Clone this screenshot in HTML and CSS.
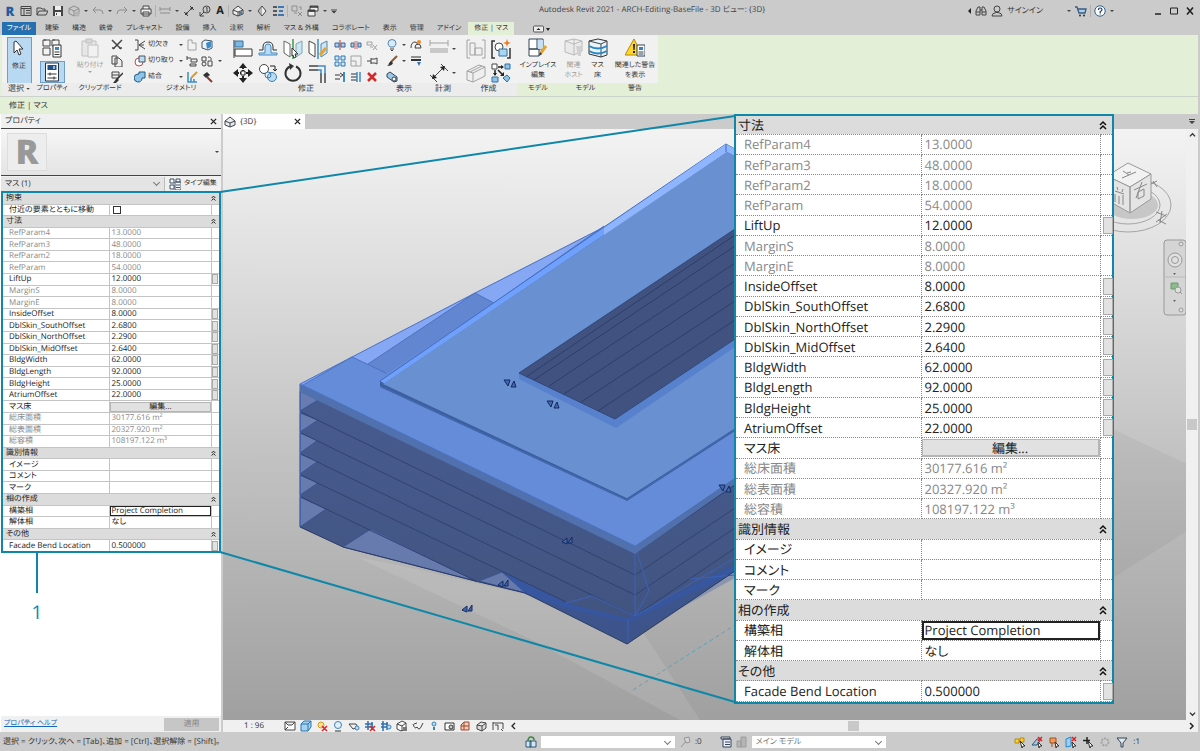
FILE: index.html
```html
<!DOCTYPE html>
<html lang="ja">
<head>
<meta charset="utf-8">
<meta name="viewport" content="width=device-width, initial-scale=1">
<title>Autodesk Revit 2021 - ARCH-Editing-BaseFile - 3D ビュー: {3D}</title>
<link rel="stylesheet" href="styles.css">
</head>
<body>
<header class="titlebar">
  <div class="quick">
    <b class="logo">R</b>
    <svg class="ic" viewBox="0 0 12 12"><path class="k" d="M1 1.500h10v9H1zM1 3.500h10M4 3.500v7M6 5.500h4M6 8h4"/></svg>
    <svg class="ic" viewBox="0 0 12 12"><path class="k" d="M1 10V3h4l1 1h3v2M1 10l2-4h9l-2 4z"/></svg>
    <svg class="ic" viewBox="0 0 12 12"><path fill="#444" d="M1 1h10v10H1z"/><path fill="#eee" d="M3 1h6v4H3zM3 7h6v4H3z"/><path fill="#444" d="M4 8h1v2H4z"/></svg>
    <svg class="ic dim" viewBox="0 0 12 12"><path class="k" d="M6 1l5 2.500v5L6 11 1 8.500v-5zM1 3.500L6 6l5-2.500M6 6v5"/><circle cx="9" cy="9" r="2.500" fill="#999"/></svg>
    <i class="caret"></i>
    <svg class="ic dim" viewBox="0 0 12 12"><path class="k" d="M4 2L1 5l3 3M1 5h7q3 0 3 4"/></svg>
    <i class="caret"></i>
    <svg class="ic dim" viewBox="0 0 12 12"><path class="k" d="M8 2l3 3-3 3M11 5H4Q1 5 1 9"/></svg>
    <i class="caret"></i>
    <svg class="ic" viewBox="0 0 12 12"><path class="k" d="M3 4V1h6v3M1 4h10v5H1zM3 7h6v4H3z" fill="#eee"/></svg>
    <i class="sep"></i>
    <svg class="ic dim" viewBox="0 0 12 12"><path class="k" d="M1 2v4M11 2v4M1 4h10"/><path fill="#888" d="M1 7h10v2H1z"/></svg>
    <i class="caret"></i>
    <svg class="ic" viewBox="0 0 12 12"><path class="k" d="M2 10l8-8M1 7l4 4M7 1l4 4"/><path fill="#333" d="M2 10l1-3 2 2zM10 2L9 5 7 3z"/></svg>
    <svg class="ic" viewBox="0 0 12 12"><circle class="k" cx="7.500" cy="4.500" r="3.500"/><path class="k" d="M7 3l1-.5V7M5 7l-4 4M1 7v4h4"/></svg>
    <b class="glyph-a">A</b>
    <i class="sep"></i>
    <svg class="ic" viewBox="0 0 12 12"><path d="M1 5l5-4 5 4v4l-5 2-5-2z" fill="#eee" class="k"/><path class="k" d="M1 5l5 2 5-2M6 7v4"/><path fill="#467aa8" d="M7 7l3-1v3l-3 1z"/></svg>
    <i class="caret"></i>
    <svg class="ic" viewBox="0 0 12 12"><path class="k" d="M6 1l4 5-4 5-4-5z" fill="#e8e8e8"/><path fill="#777" d="M6 1v10L2 6z" opacity=".5"/></svg>
    <svg class="ic" viewBox="0 0 12 12"><path stroke="#333" stroke-width="1.500" d="M1 2h4M1 6h4M1 10h4"/><path stroke="#3b78b5" stroke-width="2" d="M6 2h6M7 6h4M6 10h6"/></svg>
    <i class="sep"></i>
    <svg class="ic dim" viewBox="0 0 12 12"><path class="k" d="M1 1h5v5H1zM3 8h3M7 7l4 4M11 7l-4 4M8 2h2v3"/></svg>
    <svg class="ic" viewBox="0 0 12 12"><path class="k" d="M3 1h8v5H3zM1 5h7v6H1z" fill="#eee"/><path stroke="#333" stroke-width="1.500" d="M3 2h8M1 6h7"/></svg>
    <i class="caret"></i>
    <i class="caret big"></i>
  </div>
  <h1>Autodesk Revit 2021 - ARCH-Editing-BaseFile - 3D ビュー: {3D}</h1>
  <div class="account">
    <svg class="ic nar" viewBox="0 0 4 12"><path fill="#222" d="M4 3v6L1 6z"/></svg>
    <svg class="ic" viewBox="0 0 12 12"><path class="k" d="M1 10V6l2-4h2v8zM11 10V6L9 2H7v8zM5 5h2M1 7h4M7 7h4"/></svg>
    <svg class="ic" viewBox="0 0 12 12"><circle class="k" cx="6" cy="4" r="3"/><path class="k" d="M1 11q0-3 4-3.500h2q4 .5 4 3.500z"/></svg>
    <a href="#">サインイン</a>
    <i class="caret push"></i>
    <svg class="ic" viewBox="0 0 12 12"><path d="M0 2h2l2 6h6l1-4H3" stroke="#345d86" stroke-width="1.300" fill="#b8cce0"/><circle cx="5" cy="10.500" r="1" fill="#234"/><circle cx="9" cy="10.500" r="1" fill="#234"/></svg>
    <i class="sep"></i>
    <svg class="ic" viewBox="0 0 12 12"><circle cx="6" cy="6" r="5.200" fill="#fff" stroke="#35608c"/><path d="M4.500 5q0-2 1.700-2T8 4.600Q8 6 6.200 6.500V8M6.200 8.500v1" fill="none" stroke="#223f70" stroke-width="1.200"/></svg>
    <i class="caret"></i>
  </div>
  <div class="winbtns">
    <button aria-label="最小化"><svg class="ic" viewBox="0 0 12 12"><path stroke="#222" stroke-width="1.500" d="M3 9h6"/></svg></button>
    <button aria-label="最大化"><svg class="ic" viewBox="0 0 12 12"><path fill="none" stroke="#222" d="M2.500 3h7v6h-7z"/></svg></button>
    <button aria-label="閉じる"><svg class="ic" viewBox="0 0 12 12"><path stroke="#222" stroke-width="1.600" d="M3 2.500l6 7M9 2.500l-6 7"/></svg></button>
  </div>
</header>

<nav class="tabs">
  <a class="file" href="#">ファイル</a><a href="#">建築</a><a href="#">構造</a><a href="#">鉄骨</a><a href="#">プレキャスト</a><a href="#">設備</a><a href="#">挿入</a><a href="#">注釈</a><a href="#">解析</a><a href="#">マス &amp; 外構</a><a href="#">コラボレート</a><a href="#">表示</a><a href="#">管理</a><a href="#">アドイン</a><a class="active" href="#">修正 | マス</a>
  <button class="mini" aria-label="リボン表示"><svg viewBox="0 0 18 8"><rect x=".5" y="1" width="10" height="6" rx="1" fill="#eee" stroke="#555"/><path fill="#222" d="M3.500 5l2-2 2 2zM13 3h4l-2 3z"/></svg></button>
</nav>

<section class="ribbon">
  <div class="panel p-select">
    <div class="body"><button class="big on"><svg class="i20" viewBox="0 0 20 20"><path d="M7 3l7 8h-4l2 5-2 1-2-5-3 3V4z" fill="#fff" stroke="#333"/></svg><span>修正</span></button></div>
    <h2>選択 <i class="caret"></i></h2>
  </div>
  <div class="panel p-prop">
    <div class="body stack">
      <button aria-label="タイプ プロパティ"><svg class="i20" viewBox="0 0 20 20"><path d="M1 2h7v6H1zM10 2h7v6h-7zM1 10h7v7H1zM3 1v2M12 1v2" fill="#f4f4f4" stroke="#444"/><path d="M11 7h8v12h-8z" fill="#fff" stroke="#333"/><path d="M13 9h4v3h-4z" fill="#3c84c4"/><path d="M12.500 14h5M12.500 16.500h5" stroke="#333"/></svg></button>
      <button class="on" aria-label="プロパティ"><svg class="i20" viewBox="0 0 20 20"><path d="M3.500 1h13v18h-13z" fill="#fff" stroke="#234"/><path d="M5.500 3h9v5h-9z" fill="#244f86"/><path d="M11 4h2v3h-2z" fill="#8ec1ea"/><path d="M5.500 12h9M5.500 16h9M8 10.500v3M12 14.500v3" stroke="#333"/></svg></button>
    </div>
    <h2>プロパティ</h2>
  </div>
  <div class="panel p-clip">
    <div class="body clip">
      <button class="big dim"><svg class="i20" viewBox="0 0 20 20"><path d="M2 3h14v15H2z" fill="#ddd" stroke="#888"/><path d="M6 1h6v4H6z" fill="#bbb" stroke="#888"/><path d="M8 7h10v12H8z" fill="#f2f2f2" stroke="#888"/></svg><span>貼り付け</span><i class="caret"></i></button>
      <div class="col">
        <svg class="ic" viewBox="0 0 12 12"><path class="k w" d="M1 1l9 9M11 1L2 10M1 9h3M8 9h3"/></svg>
        <svg class="ic" viewBox="0 0 12 12"><path class="k" d="M1 1h5v8H1zM4 3h4l3 3v6H4z" fill="#fff"/></svg>
        <svg class="ic" viewBox="0 0 12 12"><path class="k" d="M1 1h7v6H1zM1 4h7" fill="#fff"/><path d="M12 2L5 9" stroke="#333" stroke-width="1.500"/><path fill="#333" d="M6 7l2 2-3 3H2z"/></svg>
      </div>
    </div>
    <h2>クリップボード</h2>
  </div>
  <div class="panel p-geo">
    <div class="body geo">
      <svg class="ic" viewBox="0 0 12 12"><path class="k" d="M1 1h3v10H1M11 2L5 6l6 4M5 6h5"/></svg><span>切欠き</span><i class="caret"></i>
      <svg class="ic dim" viewBox="0 0 12 12"><path class="k" d="M2 1h4v3h4v7H2z"/></svg><svg class="ic" viewBox="0 0 12 12"><path d="M1 3l3-2 7 1v7l-4 2-6-2z" fill="#e8f2fa" stroke="#456"/><path fill="#3f8bc4" d="M5 4l5-2v6L6 10z"/></svg><i></i>
      <svg class="ic" viewBox="0 0 12 12"><circle cx="5" cy="7" r="4" fill="#fff" stroke="#c44"/><path d="M5 1h6v6H5z" fill="#bcdcf2" stroke="#456"/></svg><span>切り取り</span><i class="caret"></i>
      <svg class="ic" viewBox="0 0 12 12"><path class="k" d="M1 1v4M1 3h4M5 4h6v3H5zM4 9h6v2H4z" fill="#ccc"/></svg><svg class="ic" viewBox="0 0 12 12"><path class="k" d="M1 2h4v4H1zM7 6h4v5H7zM7 2q4 0 3 3"/><circle cx="3" cy="9" r="2" class="k"/></svg><i class="caret"></i>
      <svg class="ic" viewBox="0 0 12 12"><path d="M5 1h6v6H8v1a4 4 0 1 1-4-5h1z" fill="#8cc4ea" stroke="#25577d"/></svg><span>結合</span><i class="caret"></i>
      <svg class="ic" viewBox="0 0 12 12"><path stroke="#3f8bc4" stroke-width="1.500" fill="none" d="M2 1v10h9M5 11V7M8 11V8"/><path d="M11 1L5 7" stroke="#d79b2c" stroke-width="2"/></svg><svg class="ic" viewBox="0 0 12 12"><path d="M2 4l4-3 3 3-4 3z" fill="#333"/><path d="M6 6l5 5" stroke="#8a3a2a" stroke-width="2"/></svg><i></i>
    </div>
    <h2>ジオメトリ</h2>
  </div>
  <div class="panel p-mod">
    <div class="body modify">
      <div class="bigs">
        <svg class="i20" viewBox="0 0 20 20"><path d="M1 1v18" stroke="#333"/><path d="M2 2h8v6H2z" fill="#7db8e4" stroke="#35729f"/><path d="M2 10h17v7H2z" fill="#fff" stroke="#333"/></svg>
        <svg class="i20" viewBox="0 0 20 20"><path d="M1 11h4V8q0-5 5-5t5 5v3h4" fill="none" stroke="#333"/><path d="M1 16h18v-2h-6V8q0-3-3-3T7 8v6H1z" fill="#b9dcf3" stroke="#3f8bc4"/></svg>
        <svg class="i20" viewBox="0 0 20 20"><path d="M1 2l6 3v13l-6-4z" fill="#fff" stroke="#666"/><path d="M19 2l-6 3v13l6-4z" fill="#cfe4f4" stroke="#7aa"/><path d="M10 0v20" stroke="#3a9a4a" stroke-width="1.500"/><path d="M9 9l6 6h-3l1 3-2 1-1-3-1 1z" fill="#fff" stroke="#333"/></svg>
        <svg class="i20" viewBox="0 0 20 20"><path d="M1 2l6 3v13l-6-4z" fill="#fff" stroke="#444"/><path d="M19 2l-6 3v13l6-4z" fill="#cfe4f4" stroke="#58a"/><path d="M10 0v20" stroke="#3f8bc4" stroke-width="1.500"/><path d="M18 9l-6 7" stroke="#e0a534" stroke-width="3"/></svg>
        <svg class="i20" viewBox="0 0 20 20"><path d="M10 0l4 5H6zM10 20l4-5H6zM0 10l5-4v8zM20 10l-5-4v8z" fill="#222"/><path d="M10 4v12M4 10h12" stroke="#222" stroke-width="2" stroke-dasharray="2 1"/><path d="M8 8h4v4H8z" fill="#fff" stroke="#222"/></svg>
        <svg class="i20" viewBox="0 0 20 20"><circle cx="6" cy="6" r="4.500" fill="#fff" stroke="#444"/><circle cx="14" cy="14" r="4.500" fill="#b9dcf3" stroke="#3f7fae"/><circle cx="10" cy="12" r="3" fill="none" stroke="#3f7fae"/><path d="M12 3h5v4M15 6l2 2 2-2" fill="none" stroke="#222"/></svg>
        <svg class="i20" viewBox="0 0 20 20"><path d="M13 3.500a7.500 7.500 0 1 1-6 0" fill="none" stroke="#333" stroke-width="2"/><path d="M6 0l5 3-4 4z" fill="#333"/></svg>
        <svg class="i20" viewBox="0 0 20 20"><path d="M1 3h9M1 7h9M17 10v10M13 10v10" stroke="#444" stroke-width="1.500"/><path d="M10 3h7v8M10 7h3v4" fill="none" stroke="#3f8bc4" stroke-width="1.500"/></svg>
      </div>
      <div class="smalls">
        <svg class="ic" viewBox="0 0 12 12"><path d="M1 4h4v4H1zM7 4h4v4H7z" fill="#a9d0ee" stroke="#37699a"/><path d="M6 1v10" stroke="#c33"/></svg>
        <svg class="ic" viewBox="0 0 12 12"><path d="M1 4h3v4H1zM8 4h3v4H8z" fill="#a9d0ee" stroke="#37699a"/><path d="M5 2v8M7 2v8" stroke="#c66"/></svg>
        <svg class="ic dim" viewBox="0 0 12 12"><path class="k" d="M1 3h5v3H1zM4 8h3M7 6l4 5M11 6l-4 5"/></svg>
        <svg class="ic" viewBox="0 0 12 12"><path d="M1 1h4v4H1zM7 1h4v4H7zM1 7h4v4H1zM7 7h4v4H7z" fill="#cfe6f6" stroke="#2f77b1"/></svg>
        <svg class="ic dim" viewBox="0 0 12 12"><path class="k" d="M1 1h10v10H1zM1 6h5v5"/></svg>
        <svg class="ic" viewBox="0 0 12 12"><path class="k" d="M1 6h4M5 3v6M5 4h4l2-1v6L9 8H5"/></svg>
        <svg class="ic" viewBox="0 0 12 12"><path d="M1 4h5M1 8h5M6 2l3 2-3 2" stroke="#333" fill="none"/><path d="M10 1v10" stroke="#3f8bc4" stroke-width="2"/></svg>
        <svg class="ic" viewBox="0 0 12 12"><path d="M1 3h6M1 6h6M1 9h6" stroke="#333"/><path d="M7 1v10M10 1v10" stroke="#3f8bc4" stroke-width="1.500"/></svg>
        <svg class="ic" viewBox="0 0 12 12"><path d="M2 2l8 8M10 2l-8 8" stroke="#d02a2a" stroke-width="2.500"/></svg>
      </div>
    </div>
    <h2>修正</h2>
  </div>
  <div class="panel p-view">
    <div class="body view">
      <svg class="ic" viewBox="0 0 12 12"><path d="M4 8Q2 6 2 4.500a4 4 0 0 1 8 0Q10 6 8 8z" fill="#d9ebfa" stroke="#4a86bb"/><path d="M4 10h4M5 11.500h2" stroke="#444"/></svg><i class="caret"></i><svg class="ic" viewBox="0 0 12 12"><path class="k" d="M1 9q0-6 4-6 2 0 3 3M5 9q0-4 3-4t3 4z"/><circle cx="9" cy="3" r="2" fill="#f08a24"/></svg>
      <svg class="ic" viewBox="0 0 12 12"><path d="M11 1L5 7" stroke="#8b5a2b" stroke-width="2"/><path d="M5 6l2 2q-1 3-6 3 2-1 2-3z" fill="#333"/></svg><i class="caret"></i><svg class="ic" viewBox="0 0 12 12"><path d="M1 2h10" stroke="#333"/><path d="M1 5h10" stroke="#333" stroke-width="2"/><path d="M7 7h4l-2 4z" fill="#3276b5"/></svg>
      <svg class="ic" viewBox="0 0 12 12"><path d="M1 3l3-2 7 5v4l-3 1-7-5z" fill="#9ec8e6" stroke="#345"/><circle cx="8" cy="8" r="2" fill="#fff" stroke="#345"/></svg>
    </div>
    <h2>表示</h2>
  </div>
  <div class="panel p-meas">
    <div class="body meas">
      <svg class="i20 dim" viewBox="0 0 20 20"><path class="k" d="M1 4h18M1 1v6M19 1v6"/><path fill="#999" d="M1 9h18v5H1z"/></svg><i class="caret"></i>
      <svg class="i20" viewBox="0 0 20 20"><path class="k" d="M4 15L15 4M1 12l7 7M12 1l7 7"/><path fill="#222" d="M3 16l1-5 4 4zM16 3l-1 5-4-4z"/></svg><i class="caret"></i>
    </div>
    <h2>計測</h2>
  </div>
  <div class="panel p-make">
    <div class="body make">
      <svg class="i20 dim" viewBox="0 0 20 20"><path class="k" d="M4 1H1v18h3M16 1h3v18h-3M4 4h5v12H4zM9 9h7v7H9z"/></svg>
      <svg class="i20" viewBox="0 0 20 20"><path d="M4 2H1v17h3M16 19h3V9" fill="none" stroke="#333" stroke-width="1.500"/><circle cx="8" cy="8" r="4" fill="#fff" stroke="#444"/><path d="M8 10h8v7H8z" fill="#a9d5f2" stroke="#34709d"/><path d="M16 0l1 3 3 1-3 1-1 3-1-3-3-1 3-1z" fill="#f07a1e"/></svg>
      <svg class="i20 dim" viewBox="0 0 20 20"><path class="k" d="M1 8l12-6 6 2v9L7 19l-6-2zM1 8l6 2 12-6M7 10v9M4 9l12-6" fill="#ddd"/></svg>
      <svg class="i20" viewBox="0 0 20 20"><path d="M1 1h5v5H1z" fill="#fff" stroke="#444"/><path d="M14 1h5v5h-5zM1 14h6v5H1z" fill="#8cc4ea" stroke="#34709d"/><path d="M16 12l3 3-3 4-4-4z" fill="#8cc4ea" stroke="#34709d"/><path d="M7 4h5M4 7v5M7 7l5 5" stroke="#222" stroke-width="1.500"/><path d="M13 4l-3-2v4zM4 13l-2-3h4zM13 13V9l-4 4z" fill="#222"/></svg>
    </div>
    <h2>作成</h2>
  </div>
  <div class="panel ctx p-inpl">
    <div class="body"><button class="big"><svg class="i20" viewBox="0 0 20 20"><path d="M1 1h14v10H1zM1 11h10v7H1zM9 1v10" fill="#fff" stroke="#345"/><path d="M10 2h5v9h-5z" fill="#c7dff2"/><path d="M18 8l-6 8" stroke="#e0a534" stroke-width="3"/><path d="M12 14l-1 4 3-2z" fill="#333"/></svg><span>インプレイス<br>編集</span></button></div>
    <h2>モデル</h2>
  </div>
  <div class="panel ctx p-host">
    <div class="body two"><button class="big dim"><svg class="i20" viewBox="0 0 20 20"><path d="M1 3l9-2 8 2v10l-8 4-9-3zM10 1v16M1 3l9 3 8-3" fill="#e2e2e2" stroke="#777"/><path d="M12 8h5v10h-3z" fill="#aaa"/></svg><span>関連<br>ホスト</span></button><button class="big"><svg class="i20" viewBox="0 0 20 20"><path d="M1 3l9-2 9 2v14l-6 2-12-3z" fill="#e9f4fb" stroke="#333"/><path d="M1 3l12 3 6-3M13 6v13" fill="none" stroke="#444"/><path d="M1 8q9 5 18 0M1 13q9 5 18 0" fill="none" stroke="#2b86c4" stroke-width="2"/></svg><span>マス<br>床</span></button></div>
    <h2>モデル</h2>
  </div>
  <div class="panel ctx p-warn">
    <div class="body"><button class="big"><svg class="i20" viewBox="0 0 20 20"><path d="M9 1l8 16H0z" fill="#ffd52e" stroke="#b48a00"/><path d="M8 6h2l-.4 6H8.400zM8 13h2v2H8z" fill="#222"/><path d="M12 7h8v11h-8z" fill="#fff" stroke="#345"/><path d="M14 9h4v3h-4z" fill="#3c7fc0"/><path d="M13.500 14h5M13.500 16h5" stroke="#345"/></svg><span>関連した警告<br>を表示</span></button></div>
    <h2>警告</h2>
  </div>
</section>
<div class="options">修正 | マス</div>

<main>
  <aside class="props">
    <div class="props-head"><span>プロパティ</span><button aria-label="閉じる"><svg class="x" viewBox="0 0 8 8"><path d="M1 1l6 6M7 1L1 7"/></svg></button></div>
    <div class="preview"><b>R</b><i class="caret"></i></div>
    <div class="typebar"><label class="combo"><select aria-label="要素フィルタ"><option>マス (1)</option></select></label>
      <button><svg class="ic" viewBox="0 0 12 12"><path d="M1 1h4v4H1zM1 7h4v4H1zM7 1h4v3H7zM6 4h6v8H6zM7 7h4M7 9.500h4" fill="#f4f8fc" stroke="#456"/></svg>タイプ編集</button></div>
    <table class="grid small">
      <colgroup><col class="c1"><col><col class="c3"></colgroup>
      <tbody>
      <tr class="sec"><th colspan="3">拘束<button aria-label="折りたたむ"><svg viewBox="0 0 8 10"><path d="M1 5l3-3 3 3M1 9l3-3 3 3"/></svg></button></th></tr>
      <tr><th><label for="mv">付近の要素とともに移動</label></th><td><input type="checkbox" id="mv"></td><td></td></tr>
      <tr class="sec"><th colspan="3">寸法<button aria-label="折りたたむ"><svg viewBox="0 0 8 10"><path d="M1 5l3-3 3 3M1 9l3-3 3 3"/></svg></button></th></tr>
      <tr class="ro"><th>RefParam4</th><td>13.0000</td><td></td></tr>
      <tr class="ro"><th>RefParam3</th><td>48.0000</td><td></td></tr>
      <tr class="ro"><th>RefParam2</th><td>18.0000</td><td></td></tr>
      <tr class="ro"><th>RefParam</th><td>54.0000</td><td></td></tr>
      <tr><th>LiftUp</th><td>12.0000</td><td><button class="more" aria-label="LiftUp の関連付け"></button></td></tr>
      <tr class="ro"><th>MarginS</th><td>8.0000</td><td></td></tr>
      <tr class="ro"><th>MarginE</th><td>8.0000</td><td></td></tr>
      <tr><th>InsideOffset</th><td>8.0000</td><td><button class="more" aria-label="InsideOffset の関連付け"></button></td></tr>
      <tr><th>DblSkin_SouthOffset</th><td>2.6800</td><td><button class="more" aria-label="SouthOffset の関連付け"></button></td></tr>
      <tr><th>DblSkin_NorthOffset</th><td>2.2900</td><td><button class="more" aria-label="NorthOffset の関連付け"></button></td></tr>
      <tr><th>DblSkin_MidOffset</th><td>2.6400</td><td><button class="more" aria-label="MidOffset の関連付け"></button></td></tr>
      <tr><th>BldgWidth</th><td>62.0000</td><td><button class="more" aria-label="BldgWidth の関連付け"></button></td></tr>
      <tr><th>BldgLength</th><td>92.0000</td><td><button class="more" aria-label="BldgLength の関連付け"></button></td></tr>
      <tr><th>BldgHeight</th><td>25.0000</td><td><button class="more" aria-label="BldgHeight の関連付け"></button></td></tr>
      <tr><th>AtriumOffset</th><td>22.0000</td><td><button class="more" aria-label="AtriumOffset の関連付け"></button></td></tr>
      <tr><th>マス床</th><td class="cell-btn"><button class="edit">編集...</button></td><td></td></tr>
      <tr class="ro"><th>総床面積</th><td>30177.616 m²</td><td></td></tr>
      <tr class="ro"><th>総表面積</th><td>20327.920 m²</td><td></td></tr>
      <tr class="ro"><th>総容積</th><td>108197.122 m³</td><td></td></tr>
      <tr class="sec"><th colspan="3">識別情報<button aria-label="折りたたむ"><svg viewBox="0 0 8 10"><path d="M1 5l3-3 3 3M1 9l3-3 3 3"/></svg></button></th></tr>
      <tr><th>イメージ</th><td></td><td></td></tr>
      <tr><th>コメント</th><td></td><td></td></tr>
      <tr><th>マーク</th><td></td><td></td></tr>
      <tr class="sec"><th colspan="3">相の作成<button aria-label="折りたたむ"><svg viewBox="0 0 8 10"><path d="M1 5l3-3 3 3M1 9l3-3 3 3"/></svg></button></th></tr>
      <tr><th><label for="ph1">構築相</label></th><td class="cell-in"><input type="text" id="ph1" value="Project Completion"></td><td></td></tr>
      <tr><th>解体相</th><td>なし</td><td></td></tr>
      <tr class="sec"><th colspan="3">その他<button aria-label="折りたたむ"><svg viewBox="0 0 8 10"><path d="M1 5l3-3 3 3M1 9l3-3 3 3"/></svg></button></th></tr>
      <tr><th>Facade Bend Location</th><td>0.500000</td><td><button class="more" aria-label="Facade Bend Location の関連付け"></button></td></tr>
      </tbody>
    </table>
    <div class="callmark"><i></i><span>1</span></div>
    <div class="props-foot"><a href="#">プロパティ ヘルプ</a><button disabled>適用</button></div>
  </aside>

  <section class="work">
    <div class="doctabs">
      <div class="doctab"><svg class="ic" viewBox="0 0 12 12"><path d="M1 5l5-4 5 4v4l-5 2-5-2z" fill="#e8eef4" stroke="#444"/><path d="M1 5l5 2 5-2M6 7v4" fill="none" stroke="#444"/></svg><span>{3D}</span><button aria-label="閉じる"><svg class="x" viewBox="0 0 8 8"><path d="M1 1l6 6M7 1L1 7"/></svg></button></div>
      <i class="caret big"></i>
    </div>
    <div class="canvas-row">
      <svg class="scene" viewBox="223 129 964 591" preserveAspectRatio="xMinYMin slice" role="img" aria-label="3D マス モデル">
        <defs>
          <linearGradient id="sky" x1="0" y1="0" x2="0" y2="1"><stop offset="0" stop-color="#f3f3f3"/><stop offset=".55" stop-color="#c2c2c2"/><stop offset="1" stop-color="#a0a0a0"/></linearGradient>
          <linearGradient id="wall" x1="0" y1="0" x2="0" y2="1"><stop offset="0" stop-color="#475b90"/><stop offset="1" stop-color="#41547f"/></linearGradient>
          <g id="grip" fill="#4169b4" stroke="#16295e"><path d="M-6-4h6l-2 6zM1 3l3-6 2 6z"/></g>
          <g id="grip2" fill="#4169b4" stroke="#16295e"><path d="M-5 1l5-4v6zM1 2l4-6v6z"/></g>
        </defs>
        <path fill="url(#sky)" d="M223 129h964v591H223z"/>
        <path fill="#fff" opacity=".1" d="M357 557l45 9 233 54 65 100-20 0-150-81z"/>
        <path fill="#000" opacity=".04" d="M1113 429l74 35v67l-74 47z"/>
        <path fill="url(#wall)" d="M300 384v143l43 20 132 34 50 12 102 51 108-73V470z"/>
        <g fill="#7f93c8" opacity=".6" stroke="#36559c">
          <path d="M300 391v20l18-11zM300 413v19l18-12zM300 433v20l18-13zM300 454v20l18-13zM300 475v20l18-12zM300 497v30l26-18z"/>
          <path d="M343 547l28-18 105 52z"/><path d="M479 581l23-9 24 21z"/>
        </g>
        <path d="M502 571l64 32 62 17 107-56v14l-90 50-18 16-102-51z" fill="#3357a4" opacity=".3"/>
        <path d="M502 571l64 32 62 15 107-54v8l-107 50-62-14-41-14z" fill="#3158b4" opacity=".5"/>
        <path fill="none" stroke="#31426f" d="M301 391l334 162 100-68M301 412l334 163 100-67M301 433l334 162 100-67M301 454l334 162 100-68M301 475l265 127M301 497l175 84"/>
        <path fill="none" stroke="#3d62b8" d="M300 384v143M635 546v70l14-25-14-45M635 616l100-58M628 620v24M566 603l26-7 43 20M690 579l45-4"/>
        <path fill="none" stroke="#2a3a63" d="M300 527l43 20 132 34 50 12 102 51 108-73"/>
        <path fill="#5070ae" d="M300 384l335 162 100-68v6l-100 70-335-162z"/>
        <path fill="#658cd8" d="M300 384l52-27 123-64 129-66 131-79v330l-100 68z"/>
        <path fill="#86a7f4" d="M300 384l52-27-49 28zM352 357l123-64-107 71zM475 293l129-66-110 76z"/>
        <path fill="#6286cf" d="M475 293l19 10-108 71-18-10z"/>
        <path fill="none" stroke="#4d74c4" d="M300 384l52-27 123-64 129-66M352 357l34 16M475 293l19 10M303 385l49-28M368 364l107-71M494 303l110-77M300 384l335 162"/>
        <path fill="#6fa0fb" stroke="#426dc0" d="M380 381l224-154 122-83 9 5v7l-8-4-344 233z"/>
        <path fill="#90b5ff" d="M604 228l122-84 9 5v7l-8-4-123 84z"/>
        <path fill="#3d5f9f" d="M380 381v6l247 114v-3l-240-113zM627 498l108-70v3l-108 70z"/>
        <path fill="#6990d0" d="M383 384l344-232 8 4v272l-108 70z"/>
        <path fill="none" stroke="#426cb6" d="M726 144v8M380 386l247 114 108-71"/>
        <path fill="#5781cd" d="M519 373v6l97 49 119-81v-10l-120 81z"/>
        <path fill="#415280" stroke="#2f4778" d="M519 373l216-144v110l-120 80z"/>
        <path fill="none" stroke="#2d3e69" d="M534 380l201-134M549 386l186-123M564 394l171-113M581 402l154-101M598 411l137-91M526 377l209-142"/>
        <path fill="none" stroke="#5aa3b8" stroke-dasharray="4 3" d="M633 690l102-65"/>
        <use href="#grip" x="510" y="384"/><use href="#grip" x="553" y="405"/><use href="#grip" x="725" y="489"/>
        <use href="#grip2" x="567" y="541"/><use href="#grip2" x="503" y="584"/><use href="#grip2" x="467" y="609"/>
        <g fill="none" stroke="#a5a5a5">
          <ellipse cx="1128" cy="205" rx="43" ry="27"/><ellipse cx="1128" cy="205" rx="32" ry="19"/>
          <ellipse cx="1132" cy="205" rx="26" ry="14" fill="#999" stroke="none" opacity=".4"/>
          <path fill="#f2f2f2" stroke="#999" d="M1128 163l23 11-21 13-23-11z"/>
          <path fill="#e4e4e4" stroke="#999" d="M1107 176l23 11v26l-23-13zM1130 187l21-13v25l-21 14z"/>
          <path stroke="#888" d="M1122 178l14-6M1129 175l-6-4M1127 173l4-1M1115 191l9 3M1117 187l1 3M1123 189l-1 3M1115 194v8M1119 196v8M1123 195v10M1134 190l13-6M1142 182l-6 16M1138 192l6-3v7l-6 3z"/>
          <path stroke="#888" d="M1156 212l10 4M1156 222l11-8M1158 220l8 4M1162 211l-2 12M1151 184l6-3M1153 181l4 6"/>
        </g>
        <g fill="#e0e0e0" stroke="#999"><rect x="1164" y="240" width="22" height="75" rx="3" fill="#d5d5d5"/>
          <circle cx="1175" cy="260" r="7"/><circle cx="1175" cy="260" r="3.500"/><path d="M1164 277h22" stroke="#bbb"/><circle cx="1181" cy="244" r="2"/><circle cx="1181" cy="310" r="2"/>
          <path d="M1171 283h7v6h-7z" fill="#8fb98f" stroke="#6b9a6b"/><circle cx="1178" cy="290" r="3"/><path d="M1180 292l2 2"/><path d="M1173 273h3l-1.500 2zM1173 300h3l-1.500 2z" fill="#666" stroke="none"/></g>
      </svg>
      <div class="vscroll"><svg viewBox="0 0 8 8"><path d="M1 5l3-3 3 3"/></svg><i></i><svg viewBox="0 0 8 8"><path d="M1 3l3 3 3-3"/></svg></div>
    </div>
    <div class="viewbar">
      <span class="scale">1 : 96</span>
      <svg class="ic" viewBox="0 0 12 12"><path d="M1 2h10v8H1zM1 2l3 3h4l3-3M1 10l3-3" fill="#fff" stroke="#444"/></svg>
      <svg class="ic" viewBox="0 0 12 12"><path d="M1 4l3-3h7v6l-3 4H1zM1 4h7v7M8 4l3-3" fill="#a5d2f0" stroke="#2975b0"/></svg>
      <svg class="ic" viewBox="0 0 12 12"><circle cx="5" cy="5" r="3" fill="#ffe58a" stroke="#d69b20"/><path d="M6 6l5 5M11 6l-5 5" stroke="#d22" stroke-width="1.500"/></svg>
      <svg class="ic" viewBox="0 0 12 12"><circle cx="6" cy="5" r="3.500" fill="#e0f0fb" stroke="#3a82b8"/><path d="M3 11h6" stroke="#333"/></svg>
      <svg class="ic" viewBox="0 0 12 12"><path d="M1 4l4 5 3-1M1 4h7l1 2" fill="none" stroke="#444"/><circle cx="9" cy="8" r="2" fill="#bcdff5" stroke="#3a82b8"/></svg>
      <svg class="ic" viewBox="0 0 12 12"><path d="M1 4h8M1 7h8M4 1v9M8 2v8" stroke="#2f6fae" stroke-width="1.500"/><path d="M6 6l5 5M11 6l-5 5" stroke="#d22" stroke-width="1.500"/></svg>
      <svg class="ic" viewBox="0 0 12 12"><path d="M1 4h7M1 7h7M3 1v10M7 2v8" stroke="#2f6fae" stroke-width="1.500"/><circle cx="9" cy="7" r="2" fill="#bcdff5" stroke="#3a82b8"/></svg>
      <svg class="ic" viewBox="0 0 12 12"><path d="M1 4l5-3 4 2v6l-5 2-4-2zM1 4l5 2 4-3M6 6v5" fill="#fff" stroke="#444"/><path d="M7 7h4v4H7z" fill="#777"/></svg>
      <svg class="ic" viewBox="0 0 12 12"><path d="M1 4q2 6 4 3 2 4 4 0l2-4M2 4l3-1" fill="none" stroke="#444"/></svg>
      <svg class="ic" viewBox="0 0 12 12"><circle cx="6" cy="4" r="2" fill="#bcdff5" stroke="#3a82b8"/><path d="M6 7v3" stroke="#3a82b8" stroke-width="2"/></svg>
      <svg class="ic" viewBox="0 0 12 12"><path d="M1 3h9v7H1z" fill="#fff" stroke="#333"/><circle cx="7" cy="7" r="2" fill="#ccc" stroke="#333"/></svg>
      <svg class="ic" viewBox="0 0 12 12"><path d="M1 10V5l3-3h5v8zM4 2v8M1 6h8" fill="#f5cfa5" stroke="#944"/></svg>
      <svg class="ic" viewBox="0 0 12 12"><path d="M1 5l4-3 5 1v5l-4 3-5-2zM1 5l5 1 4-3M6 6v5" fill="#ddd" stroke="#444"/></svg>
      <svg class="ic" viewBox="0 0 12 12"><path d="M1 2v8M1 3h10v6M3 5h3v5M9 9l2 2" fill="none" stroke="#444"/></svg>
      <svg class="ic" viewBox="0 0 12 12"><path d="M7 3L4 6l3 3" fill="none" stroke="#222" stroke-width="1.300"/></svg>
      <div class="hscroll"><i></i></div>
      <svg class="ic" viewBox="0 0 12 12"><path d="M4 3l3 3-3 3" fill="none" stroke="#222" stroke-width="1.500"/></svg>
    </div>

    <svg class="leaders" aria-hidden="true"><path d="M-2 78L513 2M-2 438L513 588"/></svg>
    <div class="callout">
      <table class="grid large">
      <colgroup><col class="c1"><col><col class="c3"></colgroup>
      <tbody>
      <tr class="sec first"><th colspan="3">寸法<button aria-label="折りたたむ"><svg viewBox="0 0 8 10"><path d="M1 5l3-3 3 3M1 9l3-3 3 3"/></svg></button></th></tr>
      <tr class="ro"><th>RefParam4</th><td>13.0000</td><td></td></tr>
      <tr class="ro"><th>RefParam3</th><td>48.0000</td><td></td></tr>
      <tr class="ro"><th>RefParam2</th><td>18.0000</td><td></td></tr>
      <tr class="ro"><th>RefParam</th><td>54.0000</td><td></td></tr>
      <tr><th>LiftUp</th><td>12.0000</td><td><button class="more" aria-label="LiftUp の関連付け"></button></td></tr>
      <tr class="ro"><th>MarginS</th><td>8.0000</td><td></td></tr>
      <tr class="ro"><th>MarginE</th><td>8.0000</td><td></td></tr>
      <tr><th>InsideOffset</th><td>8.0000</td><td><button class="more" aria-label="InsideOffset の関連付け"></button></td></tr>
      <tr><th>DblSkin_SouthOffset</th><td>2.6800</td><td><button class="more" aria-label="SouthOffset の関連付け"></button></td></tr>
      <tr><th>DblSkin_NorthOffset</th><td>2.2900</td><td><button class="more" aria-label="NorthOffset の関連付け"></button></td></tr>
      <tr><th>DblSkin_MidOffset</th><td>2.6400</td><td><button class="more" aria-label="MidOffset の関連付け"></button></td></tr>
      <tr><th>BldgWidth</th><td>62.0000</td><td><button class="more" aria-label="BldgWidth の関連付け"></button></td></tr>
      <tr><th>BldgLength</th><td>92.0000</td><td><button class="more" aria-label="BldgLength の関連付け"></button></td></tr>
      <tr><th>BldgHeight</th><td>25.0000</td><td><button class="more" aria-label="BldgHeight の関連付け"></button></td></tr>
      <tr><th>AtriumOffset</th><td>22.0000</td><td><button class="more" aria-label="AtriumOffset の関連付け"></button></td></tr>
      <tr><th>マス床</th><td class="cell-btn"><button class="edit">編集...</button></td><td></td></tr>
      <tr class="ro"><th>総床面積</th><td>30177.616 m²</td><td></td></tr>
      <tr class="ro"><th>総表面積</th><td>20327.920 m²</td><td></td></tr>
      <tr class="ro"><th>総容積</th><td>108197.122 m³</td><td></td></tr>
      <tr class="sec"><th colspan="3">識別情報<button aria-label="折りたたむ"><svg viewBox="0 0 8 10"><path d="M1 5l3-3 3 3M1 9l3-3 3 3"/></svg></button></th></tr>
      <tr><th>イメージ</th><td></td><td></td></tr>
      <tr><th>コメント</th><td></td><td></td></tr>
      <tr><th>マーク</th><td></td><td></td></tr>
      <tr class="sec"><th colspan="3">相の作成<button aria-label="折りたたむ"><svg viewBox="0 0 8 10"><path d="M1 5l3-3 3 3M1 9l3-3 3 3"/></svg></button></th></tr>
      <tr><th><label for="ph2">構築相</label></th><td class="cell-in"><input type="text" id="ph2" value="Project Completion"></td><td></td></tr>
      <tr><th>解体相</th><td>なし</td><td></td></tr>
      <tr class="sec"><th colspan="3">その他<button aria-label="折りたたむ"><svg viewBox="0 0 8 10"><path d="M1 5l3-3 3 3M1 9l3-3 3 3"/></svg></button></th></tr>
      <tr><th>Facade Bend Location</th><td>0.500000</td><td><button class="more" aria-label="Facade Bend Location の関連付け"></button></td></tr>
      </tbody>
      </table>
    </div>
  </section>
</main>

<footer class="status">
  <span class="hint">選択 = クリック、次へ = [Tab]、追加 = [Ctrl]、選択解除 = [Shift]。</span>
  <div class="sets">
    <svg class="ic" viewBox="0 0 12 12"><path d="M5 5h6v6H5zM1 5h5v6H1z" fill="#cfe8f6" stroke="#357"/><path d="M3 5q0-4 3-4t3 3" fill="none" stroke="#3a8a3a" stroke-width="1.500"/></svg>
    <label class="combo w1"><select aria-label="ワークセット"><option></option></select></label>
    <svg class="ic dim" viewBox="0 0 12 12"><path d="M2 11l5-6M5 2l5-1 1 5-4 1z" fill="#ddd" stroke="#555"/></svg><span>:0</span>
    <svg class="ic gap" viewBox="0 0 12 12"><path d="M1 1h9v2H1zM3 3h8v8H3zM5 6h5M5 8.500h5" fill="#eef" stroke="#345"/></svg>
    <svg class="ic dim" viewBox="0 0 12 12"><path d="M1 5h4v6H1zM5 1h5v10H5z" fill="#999" stroke="#666"/></svg>
    <label class="combo w2"><select aria-label="デザイン オプション"><option>メイン モデル</option></select></label>
  </div>
  <div class="picks">
    <svg class="ic" viewBox="0 0 12 12"><path d="M1 3h4v4H1zM6 2h4v4H6z" fill="#ffcf33" stroke="#b58a10"/><path d="M6 5l5 5H9l-1 2z" fill="#fff" stroke="#333"/></svg>
    <svg class="ic" viewBox="0 0 12 12"><path d="M1 9l5-6h4l-4 6z" fill="#9dccec" stroke="#357"/><path d="M7 1l4 4M11 1L7 5" stroke="#d22" stroke-width="1.500"/><path d="M7 6l4 4H9l-1 2z" fill="#fff" stroke="#333"/></svg>
    <svg class="ic" viewBox="0 0 12 12"><path d="M2 2h6v5H2zM4 7v4" fill="#f29a5c" stroke="#a4501c"/><path d="M7 6l4 4H9l-1 2z" fill="#fff" stroke="#333"/></svg>
    <svg class="ic" viewBox="0 0 12 12"><path d="M1 3l5-2v9l-5 1z" fill="#9dccec" stroke="#28c"/><path d="M7 1l4 4M11 1L7 5" stroke="#d22" stroke-width="1.500"/><path d="M7 6l4 4H9l-1 2z" fill="#fff" stroke="#333"/></svg>
    <svg class="ic" viewBox="0 0 12 12"><path d="M5 1v7M1 4.500h7" stroke="#222" stroke-width="1.500"/><path d="M6 5l5 5H9l-1 2z" fill="#fff" stroke="#333"/></svg>
    <svg class="ic dim" viewBox="0 0 12 12"><circle cx="6" cy="6" r="3.500" fill="none" stroke="#777" stroke-width="2" stroke-dasharray="2 1"/></svg>
    <svg class="ic" viewBox="0 0 12 12"><path d="M1 2h10L7 7v4H5V7z" fill="#dfe8f0" stroke="#345"/></svg><span>:1</span>
  </div>
</footer>
</body>
</html>
```
FILE: styles.css
```css
* { box-sizing: border-box; }
html, body { height: 100%; }
body {
  margin: 0; display: flex; flex-direction: column; min-height: 100vh; overflow: hidden;
  background: #cbcbcb; color: #333;
  font: 8px/10px "Open Sans", "Noto Sans CJK JP", sans-serif;
  font-feature-settings: "palt";
  text-rendering: geometricPrecision;
}
button, input, select { font: inherit; font-feature-settings: inherit; text-rendering: inherit; color: inherit; margin: 0; padding: 0; border: 0; background: none; }
a { color: inherit; text-decoration: none; }
h1, h2 { margin: 0; font-size: inherit; font-weight: 400; }
svg { display: block; }
.ic { width: 12px; height: 12px; flex: none; }
.ic.nar { width: 4px; }
.i20 { width: 20px; height: 20px; flex: none; }
.k { fill: none; stroke: #444; }
.k[fill] { fill: #eee; }
.w { stroke-width: 1.500; }
.dim { opacity: .45; }
.caret { flex: none; width: 4px; height: 2px; background: #444; clip-path: polygon(0 0, 100% 0, 50% 100%); display: inline-block; }
.caret.big { width: 6px; height: 5px; clip-path: polygon(0 0, 100% 0, 100% 20%, 0 20%, 0 40%, 100% 40%, 50% 100%, 0 40%); }
.sep { width: 1px; height: 12px; background: #b0b0b0; margin: 0 -1px; }

.titlebar { flex: none; height: 22px; display: flex; align-items: center; padding: 0 4px; }
.quick { display: flex; align-items: center; gap: 4px; }
.logo { width: 12px; color: #1f5fa0; font-size: 13px; text-align: center; font-weight: 800; }
.glyph-a { width: 10px; font-size: 11px; color: #222; text-align: center; }
.titlebar h1 { flex: 1; text-align: center; color: #444; padding-bottom: 2px; }
.account { display: flex; align-items: center; gap: 4px; padding-right: 38px; }
.account .push { margin-left: 20px; }
.winbtns { display: flex; gap: 4px; }

.tabs { flex: none; height: 13px; display: flex; gap: 13px; padding-left: 2px; line-height: 13px; font-size: 7px; }
.tabs .file { background: #2470b0; color: #fff; width: 34px; text-align: center; margin-right: -4px; }
.tabs .active { background: #e4efd7; padding: 0 6px; margin: 0 -6px; }
.mini { margin-left: 12px; }
.mini svg { width: 18px; height: 8px; }

.ribbon { flex: none; height: 62px; display: flex; padding-left: 2px; background: #e4efd7; margin-right: 2px; border-bottom: 1px solid #ccd3cc; }
.panel { flex: none; display: flex; flex-direction: column; background: #f1f1f1; }
.panel .body { height: 48px; padding-top: 2px; display: flex; justify-content: center; }
.panel h2 { flex: 1; line-height: 12px; text-align: center; white-space: nowrap; background: #ececec; font-size: 8px; }
.panel .caret { vertical-align: middle; }
.panel.ctx h2 { background: #e4efd7; }
.p-select { width: 34px; } .p-prop { width: 32px; } .p-clip { width: 64px; }
.p-geo { width: 98px; } .p-mod { width: 152px; } .p-view { width: 44px; }
.p-meas { width: 34px; } .p-make { width: 57px; } .p-inpl { width: 42px; }
.p-host { width: 53px; } .p-warn { width: 46px; }
.p-prop h2, .p-clip h2, .p-geo h2, .ctx h2 { font-size: 7px; }
.big { display: flex; flex-direction: column; align-items: center; padding-top: 1px; font-size: 7px; white-space: nowrap; }
.big span { padding-top: 3px; }
.p-select .big { width: 25px; height: 47px; }
.p-select .big span { padding-top: 4px; }
.on { background: #b9d9f3; outline: 1px solid #6f9cc8; outline-offset: -1px; }
.panel .stack { flex-direction: column; align-items: center; gap: 1px; }
.stack button { width: 25px; height: 23px; display: grid; place-items: center; }
.clip { gap: 8px; }
.col { display: grid; grid-template-rows: repeat(3, 16px); align-items: center; }
.panel .geo { display: grid; grid-template: repeat(3, 16px) / 14px 28px 10px 15px 15px 8px; align-items: center; justify-content: start; padding-left: 2px; }
.geo span { font-size: 7px; white-space: nowrap; }
.geo .caret { justify-self: center; }
.panel .modify { justify-content: flex-start; }
.bigs { display: grid; grid-template: repeat(2, 24px) / repeat(4, 25px); place-items: center; }
.smalls { display: grid; grid-template: repeat(3, 16px) / repeat(3, 16px); place-items: center; padding-left: 2px; }
.panel .view { display: grid; grid-template: repeat(3, 16px) / 20px 4px 20px; place-items: center; justify-content: start; }
.panel .meas { display: grid; grid-template: repeat(2, 24px) / 25px 6px; place-items: center; justify-content: start; }
.panel .make { display: grid; grid-template: repeat(2, 24px) / repeat(2, 25px); place-items: center; }
.panel .two { gap: 4px; }
.options { flex: none; height: 17px; line-height: 17px; padding-left: 9px; background: #e4efd7; margin: 0 2px 0 0; }

main { flex: 1; min-height: 0; display: flex; }
.props { flex: 0 0 222px; display: flex; flex-direction: column; padding-left: 1px; background: #fff; border-right: 1px solid #ccc; }
.props-head { height: 15px; display: flex; justify-content: space-between; align-items: center; padding: 0 4px; background: #f0f0f0; border-bottom: 1px solid #444; }
.x { width: 7px; height: 7px; }
.x path { fill: none; stroke: #222; stroke-width: 1.500; }
.preview { height: 47px; display: flex; align-items: center; justify-content: space-between; padding: 4px 2px 4px 6px; background: linear-gradient(#f6f6f6, #e4e4e4); border-bottom: 1px solid #444; }
.preview b { width: 40px; height: 38px; background: #ededed; border: 1px solid #ddd; font: 800 34px/34px "Open Sans", sans-serif; color: #999; text-align: center; }
.typebar { height: 15px; display: flex; align-items: center; background: #f0f0f0; }
.typebar .combo { flex: 1; background: #e4e4e4; border-right: 1px solid #bbb; }
.typebar button { width: 56px; display: flex; align-items: center; justify-content: center; gap: 3px; white-space: nowrap; font-size: 7px; }
.combo { position: relative; display: block; height: 14px; }
.combo select { width: 100%; height: 100%; appearance: none; padding-left: 4px; }
.combo::after { content: ""; position: absolute; right: 5px; top: 3px; width: 4px; height: 4px; border: solid #777; border-width: 0 1px 1px 0; transform: rotate(45deg); }

.grid { border-collapse: collapse; table-layout: fixed; width: 100%; background: #fff; color: #222; }
.grid th { font-weight: 400; text-align: left; }
.grid th, .grid td { padding: 0; white-space: nowrap; vertical-align: middle; }
.grid .ro { color: #888; }
.grid .sec th { background: #dcdcdc; }
.sec button { float: right; }
.sec path { fill: none; stroke: #111; stroke-width: 1.500; }
.grid .more { display: block; background: #e2e2e2; border: 1px solid #aaa; }
.grid .edit { display: block; width: 100%; background: #e1e1e1; border: 1px solid #b5b5b5; }
.grid input[type=text] { display: block; width: 100%; border: 1px solid #222; background: #fff; }
.small { height: 362px; border: 2px solid #0f87a8; line-height: 10px; }
.small .c1 { width: 107px; } .small .c3 { width: 8px; }
.small th, .small td { border-top: 1px solid #c4c4c4; border-right: 1px solid #c4c4c4; }
.small tr:first-child th { border-top: 2px solid #0f87a8; }
.small th[colspan], .small td:last-child { border-right: 2px solid #0f87a8; }
.small th:first-child { padding-left: 6px; }
.small .sec th { padding-left: 3px; }
.small td { padding-left: 2px; }
.small td:last-child, .small .cell-in, .small .cell-btn { padding-left: 0; }
.small .sec svg { width: 5px; height: 8px; margin: 1px 3px 0 0; }
.small .more { width: 6px; height: 10px; }
.small .edit { height: 10px; line-height: 8px; }
.small input[type=text] { height: 10px; padding-left: 1px; line-height: 8px; }
.small input[type=checkbox] { display: block; appearance: none; width: 8px; height: 8px; border: 1px solid #333; margin-left: 1px; }
.callmark { width: 14px; margin-left: 29px; display: flex; flex-direction: column; align-items: center; color: #0f87a8; font-size: 19px; line-height: 38px; }
.callmark i { width: 2px; height: 40px; background: #0f87a8; }
.props-foot { margin-top: auto; height: 16px; display: flex; align-items: center; justify-content: space-between; padding: 0 2px 0 3px; background: #f0f0f0; }
.props-foot a { color: #1567b8; text-decoration: underline; font-size: 7px; }
.props-foot button { width: 55px; height: 13px; background: #c6c6c6; color: #888; }

.work { flex: 1; min-width: 0; position: relative; display: flex; flex-direction: column; padding: 0 2px 0 1px; }
.doctabs { flex: none; height: 15px; display: flex; align-items: center; justify-content: space-between; padding-right: 3px; }
.doctab { width: 82px; height: 15px; display: flex; align-items: center; gap: 4px; padding: 0 4px 0 1px; background: #fff; }
.doctab button { margin-left: auto; }
.canvas-row { flex: 1; min-height: 0; display: flex; }
.scene { flex: 1; min-width: 0; height: 100%; }
.vscroll { width: 12px; display: flex; flex-direction: column; align-items: center; justify-content: space-between; background: #f0f0f0; padding: 3px 0; }
.vscroll svg { width: 7px; height: 7px; }
.vscroll path { fill: none; stroke: #333; stroke-width: 1.500; }
.vscroll i { width: 10px; height: 11px; background: #c8c8c8; }
.viewbar { flex: none; height: 12px; display: flex; align-items: center; gap: 4px; background: #f0f0f0; }
.scale { width: 57px; padding-left: 21px; white-space: nowrap; }
.hscroll { flex: 1; display: flex; justify-content: center; }
.hscroll i { width: 11px; height: 10px; background: #c8c8c8; }
.leaders { position: absolute; left: 0; top: 0; width: 100%; height: 100%; overflow: visible; pointer-events: none; }
.leaders path { fill: none; stroke: #0f87a8; stroke-width: 2; }

.callout { position: absolute; left: 512px; top: 0; width: 380px; border: 2px solid #0f87a8; background: #fff; }
.large { height: 586px; font-size: 13px; line-height: 16px; }
.large tr { height: 20px; }
.large .first { height: 18px; }
.large .c1 { width: 185px; } .large .c3 { width: 12px; }
.large th, .large td { border-bottom: 1px dotted #888; border-right: 1px dotted #888; }
.large th[colspan], .large td:last-child { border-right: 0; }
.large th:first-child { padding-left: 8px; }
.large .sec th { padding-left: 2px; }
.large td { padding-left: 3px; }
.large td:last-child { padding-left: 2px; }
.large .cell-in, .large .cell-btn { padding: 0; }
.large .sec svg { width: 8px; height: 10px; margin: 3px 5px 0 0; }
.large .more { width: 10px; height: 17px; }
.large .edit { height: 18px; line-height: 14px; border-right-width: 2px; border-bottom-width: 2px; }
.large input[type=text] { height: 19px; border-width: 2px; padding-left: 1px; }

.status { flex: none; height: 19px; display: flex; align-items: center; padding: 0 4px 0 3px; white-space: nowrap; }
.hint { width: 522px; }
.sets, .picks { display: flex; align-items: center; gap: 4px; }
.sets .combo { height: 12px; background: #fff; color: #777; }
.w1 { width: 134px; } .w2 { width: 134px; }
.sets .gap { margin-left: 14px; }
.picks { margin-left: auto; padding-right: 56px; gap: 5px; }
```
